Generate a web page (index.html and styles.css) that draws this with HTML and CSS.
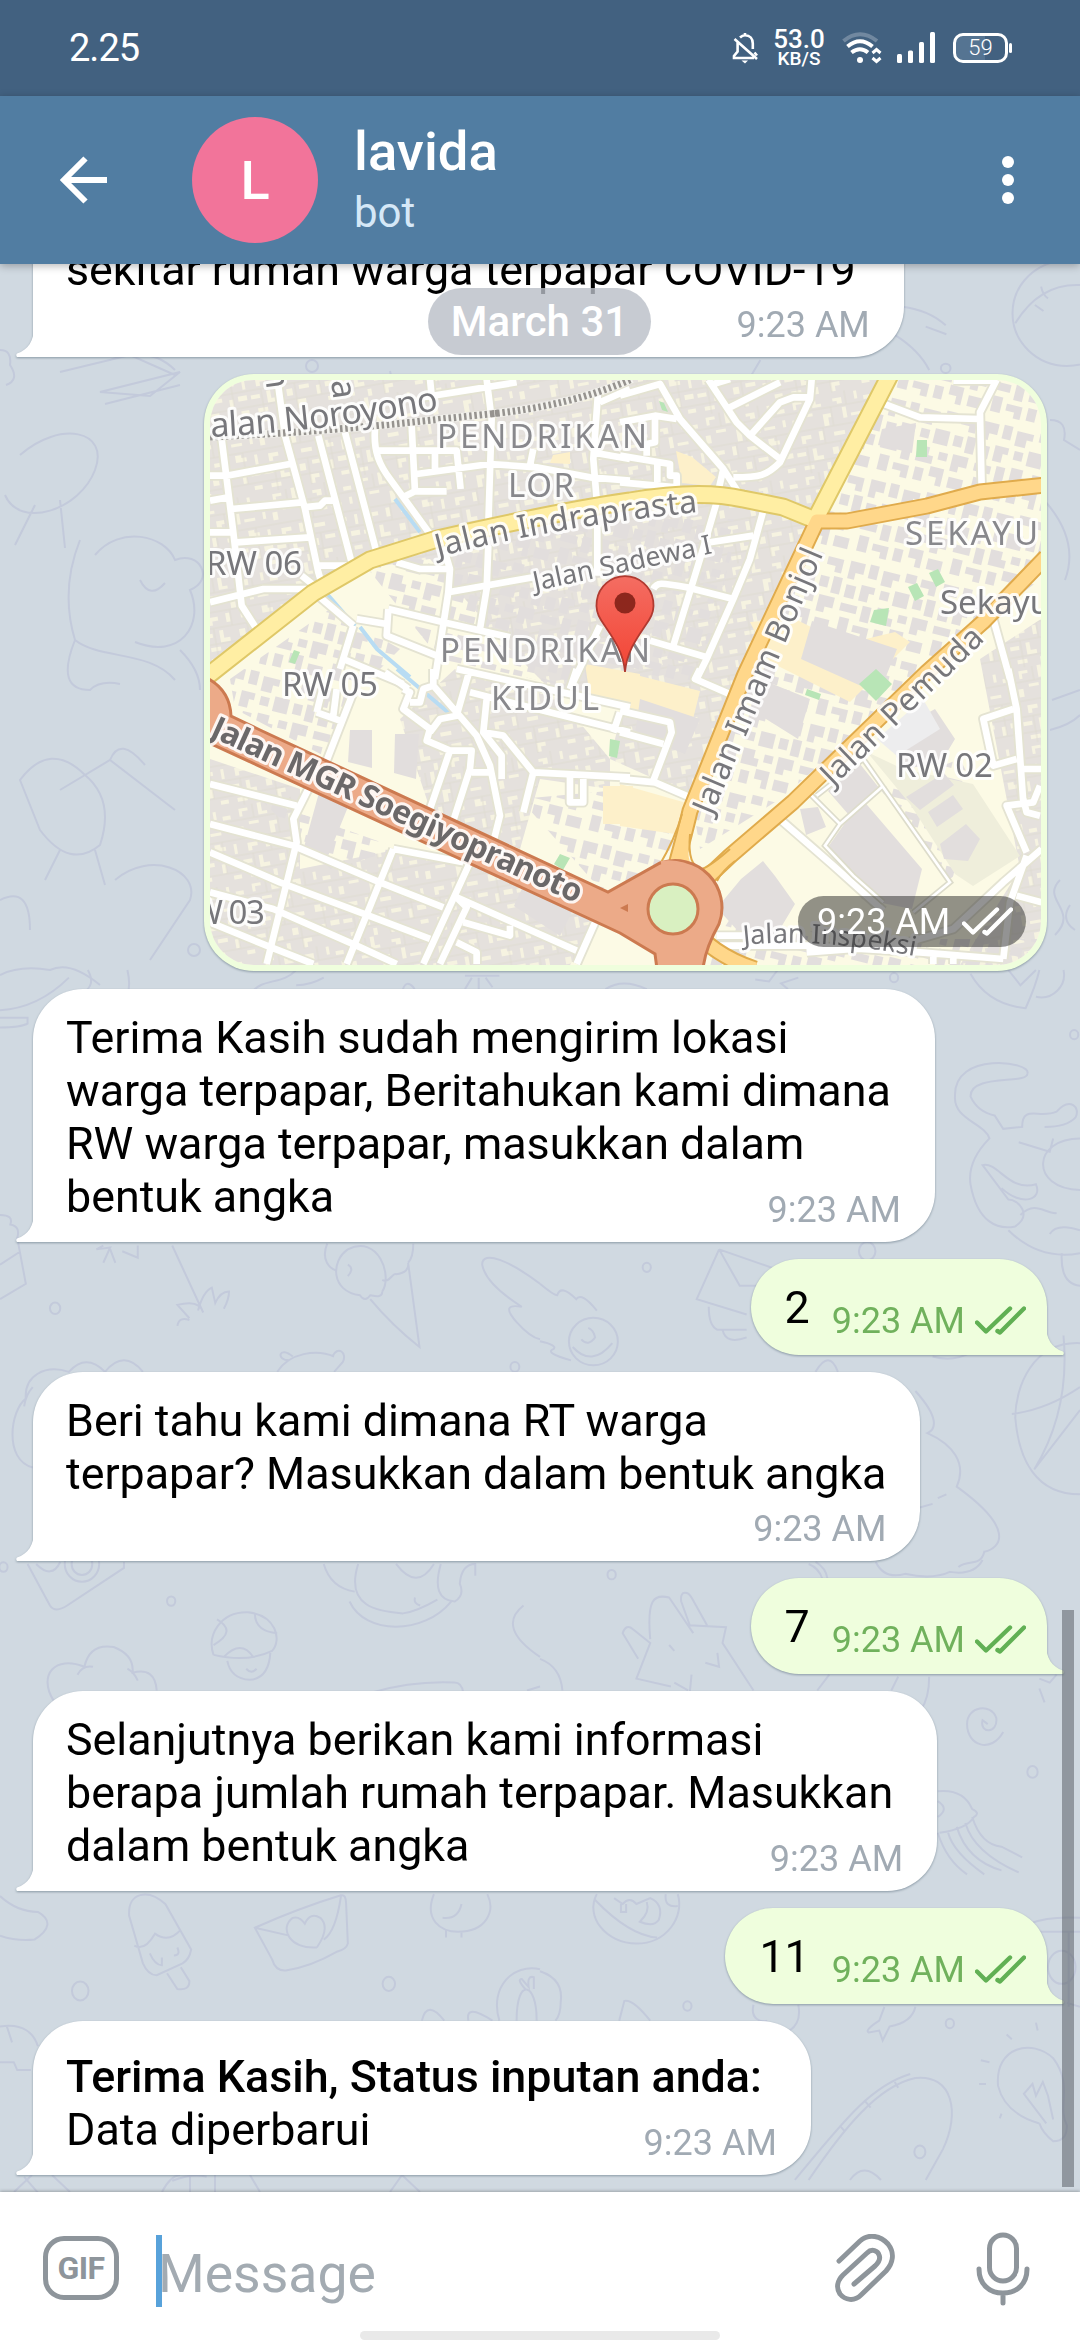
FILE: index.html
```html
<!DOCTYPE html>
<html lang="id">
<head>
<meta charset="utf-8">
<title>lavida</title>
<link rel="stylesheet" href="styles.css">
</head>
<body>
<svg class="defs" width="0" height="0" aria-hidden="true">
  <defs>
    <symbol id="checks" viewBox="0 0 51 29"><path d="M2 16.5L11 25.5L35 2.5M22.5 25L25 26.5L49 2.5" fill="none" stroke="currentColor" stroke-width="4.4" stroke-linecap="round" stroke-linejoin="round"/></symbol>
  </defs>
</svg>
<div class="screen">
  <div class="status">
    <span class="clock">2.25</span>
    <div class="status-icons">
      <svg class="bell" viewBox="0 0 26 32" width="26" height="32" fill="none" stroke="#fff" stroke-width="2.6"><path d="M8 5.5C10 3.5 11.500 3.200 13 3.200C18 3.200 20.800 7 20.800 11.500V17M5.600 10.500V19.500L2 24V26H22M2.500 7L25 27M22.500 20.500L25 23.500M13 1V4"/><path d="M9.500 28.500H16L13 31.500Z" fill="#fff" stroke="none"/></svg>
      <div class="speed"><b>53.0</b><span>KB/S</span></div>
      <svg class="wifi" viewBox="0 0 40 32" width="40" height="32" fill="none" stroke="#fff" stroke-width="4"><path d="M1.500 9Q18 -4.500 35 9" opacity=".25"/><path d="M5.500 14.500Q18 4 30.500 14.500M9.500 20.500Q18 14 26 20.500"/><circle cx="18" cy="28" r="3" fill="#fff" stroke="none"/><path d="M30.500 21L34.500 17.500L38.500 21M30.500 26L34.500 29.500L38.500 26" stroke-width="3"/></svg>
      <svg class="signal" viewBox="0 0 38 32" width="38" height="32" fill="#fff"><rect y="22" width="5" height="9" rx="1.500"/><rect x="11" y="18.500" width="5" height="12.500" rx="1.500"/><rect x="22" y="10" width="5" height="21" rx="1.500"/><rect x="33" y="0" width="5" height="31" rx="1.500"/></svg>
      <div class="battery"><span>59</span></div>
    </div>
  </div>
  <header class="header">
    <svg class="back" viewBox="0 0 48 48" width="48" height="48" fill="none" stroke="#fff" stroke-width="6"><path d="M47 24H5M25.500 2.500L4 24L25.500 45.500"/></svg>
    <div class="avatar">L</div>
    <div class="peer"><div class="name">lavida</div><div class="role">bot</div></div>
    <svg class="menu" viewBox="0 0 12 48" width="12" height="48" fill="#fff"><circle cx="6" cy="6" r="6"/><circle cx="6" cy="24" r="6"/><circle cx="6" cy="42" r="6"/></svg>
  </header>
  <main class="chat">
    <svg class="wallpaper" viewBox="0 264 1080 1928" width="1080" height="1928" aria-hidden="true">
      <g transform="translate(540 0) scale(.3444 .3333)">
        <circle cx="1530" cy="940" r="158"/><path d="M1380 970Q1450 850 1568 855M1455 860Q1460 885 1475 895M1437 915L1462 933M1052 920Q1130 930 1178 976M1120 980L1180 1003M1030 1005Q1100 1050 1130 1110M640 1080L600 1150"/><circle cx="1178" cy="1105" r="14"/>
      </g>
      <path d="M0 350Q12 350 10 365Q20 380 6 385M110 360Q150 345 175 370M390 371Q400 420 415 440M60 372L130 355L175 375M100 392L180 372L150 396ZM105 404L180 385"/><circle cx="312" cy="366" r="6"/>
      <path d="M20 455C60 420 110 430 95 470C80 510 20 530 5 495M35 505L15 545M60 500L65 548M80 540Q60 590 75 640C100 660 150 650 175 680M95 555C120 525 165 535 175 560C200 550 215 580 190 590C205 625 180 660 135 642M140 580Q150 600 165 583M75 640Q55 690 90 690Q100 680 120 684M180 650Q200 670 200 690"/>
      <path d="M20 780Q50 740 85 775Q115 800 100 845Q70 870 40 830ZM60 790L110 760L175 810M110 760Q120 735 145 765M60 850L45 880M95 850L105 885M0 900Q30 885 30 930M115 880C150 850 200 870 190 900L150 960M0 975Q20 965 50 970Q70 960 100 985"/>
      <path d="M1050 420Q1068 420 1064 440L1080 450M1044 500Q1080 540 1065 580M1052 700Q1080 690 1080 690M1050 730Q1070 725 1080 715M1060 880C1040 900 1080 910 1055 935M1070 905Q1060 920 1075 930"/><circle cx="194" cy="950" r="6"/>
      <g transform="translate(0 970) scale(.3444 .3827)">
        <path d="M0 105Q110 100 200 20M0 125H80V140Q60 150 0 150M255 0Q280 40 240 60M370 0Q380 40 370 60M730 60C760 20 820 40 860 0M860 40Q900 40 940 20M1170 50Q1180 25 1200 45L1210 60M1350 15H1450M1370 20L1350 50M1390 20V50M1410 20L1430 45"/>
        <path d="M0 640Q40 640 30 665Q60 670 50 700L75 820L0 860M0 770L60 735M300 720L280 730L320 725L300 765M320 730L335 765M355 735L400 752V720M500 720L590 895M590 895Q580 860 515 875Q540 900 550 910M515 930Q520 905 550 915M575 890Q590 840 615 830L625 870Q640 840 665 840Q665 860 650 885"/><circle cx="160" cy="884" r="15"/>
        <path d="M950 715C930 760 960 780 975 785M1010 730C1100 690 1140 800 1110 840M1110 840C1110 860 1080 850 1075 850Q1060 870 1045 850C960 840 960 760 1010 730M1010 770Q1030 780 1010 800M1110 810C1130 820 1140 790 1150 795Q1190 790 1185 765L1218 985Q1140 930 1075 860M1200 715Q1200 750 1185 765"/>
        <path d="M1568 820C1480 760 1400 730 1400 770Q1410 820 1515 880Q1450 870 1500 920Q1540 960 1568 965"/>
        <path d="M95 1300C10 1280 30 1150 75 1120C70 1060 130 1030 200 1050Q250 1000 305 1050Q360 990 415 1050M70 1140Q75 1110 95 1090M805 1050C840 1000 920 990 970 1010M840 1020C800 1020 810 980 850 1010M965 1010C980 980 1010 1000 995 1025L970 1050"/><circle cx="1495" cy="1037" r="13"/>
      </g>
      <g transform="translate(540 970) scale(.3444 .3827)">
        <path d="M190 50Q240 20 310 50M625 25L665 30L690 0M750 20L700 35L720 50M1250 10Q1300 90 1410 100Q1440 40 1450 0M1360 0L1395 40L1440 0M1440 70C1490 80 1530 40 1520 0"/><circle cx="1028" cy="20" r="12"/><circle cx="1551" cy="169" r="12"/>
        <path d="M1415 270C1430 240 1200 210 1205 330C1200 390 1290 400 1305 440Q1240 500 1250 560C1270 660 1330 680 1380 670C1430 640 1390 600 1360 600L1285 510C1330 500 1360 580 1440 560C1460 600 1400 620 1340 570M1415 270C1420 300 1250 270 1250 330Q1270 370 1320 380L1345 415L1400 410C1400 350 1450 390 1500 370C1540 330 1570 360 1555 385Q1530 410 1465 410M1490 440L1480 475L1390 450M1568 440C1430 440 1420 570 1568 575M1360 680Q1450 760 1568 740M1395 640C1440 600 1470 640 1500 635M1515 740Q1510 820 1568 825M1480 690Q1500 660 1568 680"/>
        <path d="M520 730L455 860L600 900M520 730L680 780M520 730L580 825H640M490 880Q490 930 515 940H600M530 940Q540 980 600 960M0 820Q40 850 50 850Q60 820 105 860Q120 840 165 890M0 970Q50 980 40 990Q10 1000 90 1020"/><ellipse cx="155" cy="971" rx="71" ry="62"/><path d="M95 985Q150 1040 210 975M120 965Q140 985 160 960Q155 940 140 935"/><circle cx="310" cy="777" r="12"/><circle cx="950" cy="735" r="24"/>
        <path d="M800 1050Q840 990 865 1050M1140 1010Q1200 1025 1250 1000M1568 975C1430 970 1380 1090 1380 1170C1390 1280 1440 1370 1568 1370M1370 1160Q1470 1150 1568 1090M1520 955Q1540 1150 1435 1305L1568 1150M1090 1100C1160 1170 1150 1200 1125 1210C1200 1240 1240 1290 1210 1350C1380 1460 1340 1510 1290 1520C1280 1560 1240 1540 1215 1560M1100 1405L1140 1395M1155 1380L1180 1370"/>
      </g>
      <g transform="translate(0 1560) scale(.3444 .3954)">
        <path d="M80 10L145 115Q160 135 195 115L360 20V5M105 10Q150 50 175 5"/><ellipse cx="238" cy="10" rx="50" ry="45"/><ellipse cx="238" cy="10" rx="30" ry="28"/><circle cx="497" cy="104" r="12"/><circle cx="10" cy="18" r="12"/>
        <path d="M940 10Q960 70 1030 80M1040 10C1000 120 1100 130 1170 135Q1210 130 1270 100M1015 105C1060 190 1230 190 1310 105M1280 10Q1250 100 1320 105Q1350 90 1335 60Q1340 10 1380 10V40M1205 95Q1200 110 1220 115M1150 10Q1210 80 1260 10M1520 115Q1440 170 1568 245"/>
        <path d="M620 240C600 190 640 130 720 132C800 140 820 200 790 230Q720 260 620 240M630 150Q690 180 620 215M740 135Q740 180 805 185M650 245Q700 200 735 245M660 255Q670 300 725 303Q780 300 785 235M715 275Q730 290 745 275M155 355C110 290 160 240 245 270Q260 210 330 220Q390 240 385 285Q450 270 455 330M225 290Q240 265 270 270M370 275Q390 285 400 305M1080 335Q1200 305 1320 310Q1340 310 1345 335M1530 330L1568 320"/>
        <path d="M0 850Q50 890 110 890Q170 920 100 960Q50 965 0 950M375 900C370 840 430 830 480 870L555 985Q550 1010 530 1020L455 1050Q430 1050 415 1020ZM390 975Q420 990 450 945Q490 970 525 935M435 995Q450 1025 470 1025V1005M515 980Q525 1000 505 1000M485 1045L515 1085Q550 1090 550 1065L525 1030"/>
        <path d="M740 930Q870 880 990 848Q1005 845 1005 870L1010 970Q1005 985 980 990Q900 1030 830 1038Q800 1040 790 1010ZM740 930L840 950M990 850Q975 940 940 960M920 980C840 985 810 930 850 905Q870 900 885 920Q900 890 930 905Q960 930 920 980M1260 845C1230 910 1280 940 1330 940C1410 940 1440 890 1415 845M1285 905Q1330 910 1340 870M1295 935V955M1340 940V955"/>
        <circle cx="233" cy="1090" r="24"/><circle cx="1129" cy="1072" r="18"/><path d="M0 1180C70 1170 100 1200 110 1230M20 1180L35 1220M0 1270H40L50 1290H90M1450 1165C1420 1080 1490 1020 1568 1035M1500 1165C1500 1050 1560 1070 1558 1165M1525 1085Q1500 1060 1515 1060L1535 1080Q1530 1050 1550 1055V1085M1225 1165Q1240 1110 1290 1165M1360 1165Q1350 1120 1430 1165M70 1560L110 1600M500 1570Q560 1550 600 1560"/>
      </g>
      <g transform="translate(540 1560) scale(.3444 .3954)">
        <circle cx="208" cy="37" r="12"/><path d="M780 10Q810 20 820 48M800 5Q830 20 835 48M975 5Q1000 50 1060 35Q1140 50 1190 30Q1260 40 1285 0M0 250Q60 270 65 330M320 200C310 100 330 85 375 95L445 185M410 105C405 75 430 80 440 95L485 165M410 105L435 165L540 170L530 210L620 330M285 250L240 185Q250 160 270 175L320 210L280 300L380 320M440 290L435 335M390 310L430 330M515 235L520 270L480 260M375 215L390 230"/>
        <path d="M805 330L840 290M1020 330L1040 295M1130 295Q1130 350 1105 380M1450 300L1480 310L1500 290M1465 360L1450 325M1345 435C1310 490 1240 470 1240 415C1240 370 1310 360 1325 400C1330 440 1275 440 1285 405L1300 415"/><circle cx="1430" cy="536" r="15"/>
        <path d="M1155 585C1210 580 1240 600 1255 630Q1280 640 1260 650Q1240 680 1160 690M1255 650Q1280 720 1340 725L1400 752M1235 665Q1260 740 1390 790M1210 675Q1240 760 1340 785M1185 690Q1200 740 1290 795M1155 690Q1180 760 1240 795M1155 610Q1190 630 1155 650"/>
        <path d="M165 845C130 900 190 970 280 970C370 970 420 900 400 845M160 860Q260 950 340 955M215 855L240 870Q260 850 280 870L320 855Q360 870 345 910Q330 930 290 915Q320 890 310 865M235 870V890L250 890V870M365 845Q360 880 400 875M0 1040Q70 1060 60 1120Q60 1150 45 1165M230 1165L245 1115Q270 1110 320 1165"/><ellipse cx="1515" cy="1030" rx="40" ry="42"/><path d="M1420 920Q1480 900 1568 905M1450 940H1568M1535 940V1130M1568 1130L1530 1120"/>
        <path d="M620 1125C610 1160 640 1170 660 1165M750 1125Q760 1170 725 1190M1000 1130L985 1165Q940 1190 955 1195L985 1190L995 1215L1015 1180Q1080 1170 1090 1130"/><circle cx="428" cy="1128" r="12"/><circle cx="1190" cy="1172" r="12"/>
        <path d="M740 1568C880 1420 960 1330 1075 1300M1090 1310C980 1330 880 1440 780 1568M1090 1310C1200 1300 1220 1400 1170 1490L1120 1568M870 1430L885 1445M945 1370L960 1385M1030 1320L1040 1335M900 1568Q940 1520 990 1568"/><ellipse cx="1103" cy="1497" rx="16" ry="16"/>
        <path d="M1450 1425Q1350 1400 1330 1330C1320 1230 1430 1210 1490 1260C1550 1330 1500 1380 1530 1430Q1530 1470 1490 1470Q1460 1450 1450 1425M1470 1425L1405 1350L1430 1325L1440 1355L1460 1320L1475 1355L1490 1415M1280 1265L1305 1270M1355 1200L1370 1212M1440 1170L1445 1190M1275 1325H1295M1340 1400L1335 1412"/>
      </g>
      <path d="M14 2192L32 2175M52 2175L70 2192M162 2192Q170 2176 180 2175M190 2175V2192M215 2175V2192M250 2175L260 2192M390 2192L402 2175L420 2192"/>
    </svg>

    <div class="bubble in first stacked"><p>sekitar rumah warga terpapar COVID-19</p><time>9:23 AM</time></div>

    <div class="map-bubble">
      <svg class="map" viewBox="210 381 831 585" width="831" height="585">
        <defs>
          <pattern id="dense" width="88" height="76" patternUnits="userSpaceOnUse" patternTransform="rotate(-10)">
            <rect width="88" height="76" fill="#e5e1dd"/>
            <path fill="#f6f3e1" d="M6 3h9v3h-6v5h-3zM25 0h4v9h5v3h-9zM46 6h9v6h-5v-3h-4zM68 2h3v8h-3zM77 8h8v4h-8zM3 21h5v8h-5zM14 17h10v3h-10zM34 20h8v4h-3v8h-5zM54 16h4v11h-4zM62 23h11v3h-11zM81 19h3v7h-3zM9 38h10v4h-6v4h-4zM27 36h4v9h-4zM42 39h11v4h-11zM64 35h6v3h5v4h-11zM83 37h3v10h-3zM2 54h9v4h-9zM18 52h4v8h6v4h-10zM38 54h6v7h-6zM51 52h10v4h-10zM68 55h4v9h-4zM77 53h9v5h-9zM7 68h10v4h-10zM30 68h4v7h-4zM47 66h9v4h-5v5h-4zM78 68h8v4h-8z"/>
            <path stroke="#dedbcf" stroke-width=".8" fill="none" d="M0 14H88M0 33H88M0 49H88M0 65H88M20 0V14M43 14V33M59 0V14M32 33V49M72 33V65M47 49V76M13 49V76"/>
          </pattern>
          <pattern id="loose" width="96" height="84" patternUnits="userSpaceOnUse" patternTransform="rotate(14)">
            <path fill="#e2dedd" d="M2 3h15v11h-8v7h-7zM22 2h9v14h-9zM36 5h17v7h-6v8h-11zM59 2h11v9h-11zM75 4h16v14h-7v-6h-9zM3 27h10v13h-10zM18 24h14v7h-5v9h-9zM38 25h9v9h-9zM52 22h15v15h-15zM72 24h9v11h-9zM85 22h9v17h-9zM2 46h17v8h-17zM24 44h9v16h-9zM39 42h12v8h5v8h-17zM61 44h9v8h-9zM75 43h16v11h-8v6h-8zM4 60h10v16h-10zM19 65h16v13h-7v-6h-9zM41 64h9v13h-9zM56 60h14v18h-6v-8h-8zM76 66h15v11h-15z"/>
          </pattern>
          <linearGradient id="pin" x1="0" y1="0" x2="0" y2="1"><stop offset="0" stop-color="#f46d62"/><stop offset="1" stop-color="#f34434"/></linearGradient>
          <g id="lanes">
            <path transform="translate(190 360) scale(.3333)" d="M262 60L285 230L345 450L385 640L400 690M60 350H110L300 315M60 425L115 415M60 520H130M95 240L130 520L155 740L200 810M125 450L335 430M340 445L390 440L405 425H430M140 550L360 535M385 230L490 630M465 220L565 600M380 620H490M555 210C550 280 570 320 600 360L720 525M560 275H800L812 390M665 200L675 397H770M645 412L675 397M735 275V340M680 345L900 315L1040 325L1200 355L1320 365M890 62L905 180L895 500M895 560L890 690L870 810M700 115L980 70M1225 90L1210 300L1220 420M1222 500V650M1020 320L1030 270M1320 90L1230 130M1205 280L1320 300M60 730L220 690H350M335 650L385 690M390 715L490 800M500 780L590 795M490 800L450 930M460 900L640 975M620 610L690 630H780L775 700L735 960M780 630L765 580M775 700L1030 655M595 750L760 790L960 835M595 750L590 830L740 890M1140 990L1230 800M720 60L725 110"/>
            <path transform="translate(620 360) scale(.3333)" d="M0 110L120 75L180 180L310 330L355 400M0 190L105 170L170 180M105 170V250L80 255V290M0 290L150 315V350H170V385M112 310V370M0 370L170 385M265 62L350 190L390 230L480 300M320 150L480 70M280 75L330 60M390 230L480 130L520 115H570M575 62L570 120L480 310C440 350 420 355 340 355M310 330L295 395M290 430L240 600L160 860M270 550L400 530M430 455L390 600L340 720L260 900L230 960M100 690C110 670 120 670 200 685L340 720M90 845L260 895M780 130L900 175L1080 180M1130 62L1080 160L1085 380M1000 65H1130M1120 780L1170 960"/>
            <path transform="translate(190 670) scale(.3333)" d="M490 70L410 275M380 130L450 155M400 50L380 130M440 60L430 140M640 60L660 70L640 120L720 180L710 215L780 245H845L840 300L790 455M780 245L720 420M585 10L655 60M660 100H690L700 60L730 50L800 130L860 200L900 290L930 440L910 520M730 0V50M840 0L800 140L750 150L720 190M800 0L1320 115M840 70L1320 190M890 90L880 190L940 200L1030 310L1000 430M1030 310L1320 325M880 190L935 260V330M900 310H845M1290 130L1270 190M1140 320V400H1180V330M1160 0L1140 60M360 350L310 450L320 520L230 885M60 345L320 410M60 465L310 530L570 640L760 715M60 550L270 640L550 745L720 810M60 670L250 720L500 830L620 885M60 760L230 830L370 885M610 540L470 885M610 540L820 580M840 580L700 885M800 685L1160 845M800 685L830 715L750 885M820 760L960 800V770M1220 750L1160 885M800 820L860 850V885"/>
            <path transform="translate(620 670) scale(.3333)" d="M240 0L225 30L340 80M0 125L150 160L155 190L100 335M0 190L130 225M0 330L105 340L210 385M485 455L640 590L790 725M1165 0L1190 120L1210 400M1180 120L1090 150L1120 290L1190 270M1265 300H1200M1260 350L1240 400L1160 410L1220 550M1210 390L1220 430L1260 440M1265 540L1150 640L1000 780L830 830L560 850M290 800H400M300 830H560L900 850L1150 870M1220 560L1170 700L1150 870M1190 680L1265 700M940 850V885M1000 850V885"/>
          </g>
          <path id="indra" d="M438 558Q560 526 720 511"/>
          <path id="noro" d="M211 438Q330 432 460 407"/>
          <path id="insp" d="M744 946Q820 938 925 959"/>
        </defs>
        <rect x="210" y="381" width="831" height="585" fill="#fcfae5"/>
        <path fill="url(#dense)" d="M210 381H880L815 520L748 680L700 800L610 760L630 680L560 700L500 640L430 560L360 570L210 670ZM210 760L300 790V870L400 850L460 860L600 920L570 966H210ZM455 670L560 700L610 760V790L540 780L520 850L430 810L400 720ZM980 660L1041 620V966H960L1020 870Z"/>
        <path fill="url(#loose)" d="M880 381H1041V580L960 640L850 740L780 800L700 850L690 790L748 680L820 520ZM360 560L460 550L610 520L740 520L700 680L580 690L440 660ZM230 680L330 610L400 650L350 700L330 760L235 710ZM520 800L630 790L690 810L660 870L600 890ZM800 966H700L730 920L860 940H1041V966ZM880 790L960 760L1000 840L950 880ZM260 800L400 850L330 870Z"/>
        <g fill="#fdf0ca"><path d="M676 452l16 6 24 20-6 9-28-3zM553 456l17-3v12l-20-1zM585 665l55 10v35l-50-12zM795 620l50 25 50-12 15 10-60 60-80-40-20-40z"/><path d="M620 672l80 20-15 60-60-45zM620 785l70 20-15 30-55-8zM603 787h30v38h-30z"/></g>
        <g fill="#e2dedd"><path d="M350 731h22v38l-24-6zM395 735h24l-3 45-22-6zM320 790l30 13-22 54-24-9zM530 872l50 25-20 40-46-30zM812 622l85 28-18 45-78-35zM760 680l50 20-12 40-48-30zM862 800l60 70-10 40-50-10-34-52zM828 792l32-27 20 25-32 25zM800 810l18-2 8 20-20 8zM741 880l22-18 12 15 20 28-18 30-40-4-20-22zM882 430l34-6-4 30-34-8zM640 700l60 20-15 35-50-20z"/></g>
        <path fill="#efeedb" d="M867 753L910 805L955 875L973 887L1020 857L973 785L903 770Z"/>
        <path fill="#e2dedd" d="M906 798l38-24 10 12-34 25zM928 813l25-17 10 14-26 18zM940 845l26-20 14 15-12 22-24-2zM890 735l45-25 20 30-15 25-40 5z"/>
        <path fill="#ededee" d="M877 740L923 700L940 730L897 757Z"/>
        <g fill="#b8e5b6"><path d="M917 441h10v17h-11zM929 574l9-4 7 13-9 5zM908 588l9-4 7 13-9 5zM874 611l15-2-3 18-16-4zM659 402l5 2 4 9-6-2zM610 740l10 2-3 17-8-2zM560 855l10 4-7 12-9-6zM876 670L892 685L876 702L859 685ZM807 690l14 5-2 6-14-5zM294 651l6 2-5 12-6-2z"/></g>
        <path d="M328 596L355 627M360 628L377 650L410 678M397 670L450 715M395 500L420 533" fill="none" stroke="#b8dcf3" stroke-width="4"/>
        <use href="#lanes" class="lane-edge"/>
        <use href="#lanes" class="lane"/>
        <g transform="translate(620 670) scale(.3333)" fill="none"><path d="M570 375L660 465L615 530L700 620L790 700M590 380L730 270L990 640L880 730M660 465L790 350" stroke="#dddccb" stroke-width="18"/><path d="M570 375L660 465L615 530L700 620L790 700M590 380L730 270L990 640L880 730M660 465L790 350" stroke="#fff" stroke-width="8"/></g>
        <path class="rail-base" d="M210 438Q320 433 423 422T490 415Q570 407 632 380"/>
        <path class="rail" d="M210 438Q320 433 423 422T490 415Q570 407 632 380"/>

        <path class="yellow-edge" d="M205 679L313 594L370 561L437 540Q560 512 630 502Q700 490 743 500L783 508L815 521L890 376"/>
        <path class="orange-edge" d="M1046 486L980 493L927 507L847 522H817L745 675L690 812Q684 838 672 880M1046 558L983 623L927 673L793 803L730 857L695 890M690 925Q710 955 755 970"/>
        <path class="yellow-road" d="M205 679L313 594L370 561L437 540Q560 512 630 502Q700 490 743 500L783 508L815 521L890 376"/>
        <path class="orange-road" d="M1046 486L980 493L927 507L847 522H817L745 675L690 812Q684 838 672 880M1046 558L983 623L927 673L793 803L730 857L695 890M690 925Q710 955 755 970"/>
        <path d="M690 840Q684 870 701 869Q711 868 730 852L712 885H664Q674 866 680 835Z" fill="#ffd78a"/>
        <path d="M659 867Q675 840 682 815M690 835Q687 868 702 870Q712 866 730 850M717 882Q722 872 735 862" fill="none" stroke="#e0ab4c" stroke-width="2"/>
        <path d="M205 678Q230 690 231 717L260 731L608 893L660 864A47 47 0 0 1 719 925Q705 950 703 970H657L655 955L620 934L205 742Z" fill="#ecaa88" stroke="#cc7a50" stroke-width="3"/>
        <path d="M661 864Q672 862 685 866" stroke="#ecaa88" stroke-width="4" fill="none"/>
        <circle cx="673" cy="910" r="25" fill="#d9f0c1" stroke="#cc7a50" stroke-width="3"/>
        <path d="M620 909l8-4v8z" fill="#cc7a50"/>

        <g class="label">
          <text class="street noro"><textPath href="#noro" textLength="230">alan Noroyono</textPath></text>
          <text transform="translate(331 382) rotate(82)" font-size="34">a</text>
          <text transform="translate(264 370) rotate(82)" font-size="34">n</text>
          <text class="area" x="437" y="449" textLength="212">PENDRIKAN</text>
          <text class="area" x="508" y="498" textLength="68">LOR</text>
          <text class="street"><textPath href="#indra" textLength="264">Jalan Indraprasta</textPath></text>
          <text class="small" transform="translate(535 592) rotate(-12)" textLength="182">Jalan Sadewa I</text>
          <text x="206" y="576" font-size="33" textLength="96">RW 06</text>
          <text x="282" y="697" font-size="33" textLength="96">RW 05</text>
          <text x="896" y="778" font-size="33" textLength="97">RW 02</text>
          <text x="173" y="925" font-size="33" textLength="92">RW 03</text>
          <text class="area" x="440" y="663" textLength="212">PENDRIKAN</text>
          <text class="area" x="491" y="711" textLength="110">KIDUL</text>
          <text class="area" x="905" y="546" textLength="135">SEKAYU</text>
          <text x="940" y="615" font-size="33">Sekayu</text>
          <text class="street" transform="translate(712 817) rotate(-67)" textLength="285">Jalan Imam Bonjol</text>
          <text class="street" transform="translate(833 788) rotate(-44)" textLength="212">Jalan Pemuda</text>
          <text class="main" transform="translate(209 737) rotate(24.500)" textLength="404">Jalan MGR Soegiyopranoto</text>
          <text class="small"><textPath href="#insp" textLength="172">Jalan Inspeksi</textPath></text>
        </g>
        <path d="M625 673C623 650 610 635 601 621A28.500 28.500 0 1 1 649 621C640 635 627 650 625 673Z" fill="url(#pin)" stroke="#b03a30" stroke-width="1.800"/>
        <circle cx="625" cy="604" r="10.500" fill="#8d271d"/>
      </svg>
      <div class="map-time"><span>9:23 AM</span><svg class="ticks"><use href="#checks"/></svg></div>
    </div>

    <div class="bubble in"><p>Terima Kasih sudah mengirim lokasi<br>warga terpapar, Beritahukan kami dimana<br>RW warga terpapar, masukkan dalam<br>bentuk angka</p><time>9:23 AM</time></div>
    <div class="bubble out"><p>2</p><time>9:23 AM</time><svg class="ticks"><use href="#checks"/></svg></div>
    <div class="bubble in stacked"><p>Beri tahu kami dimana RT warga<br>terpapar? Masukkan dalam bentuk angka</p><time>9:23 AM</time></div>
    <div class="bubble out"><p>7</p><time>9:23 AM</time><svg class="ticks"><use href="#checks"/></svg></div>
    <div class="bubble in"><p>Selanjutnya berikan kami informasi<br>berapa jumlah rumah terpapar. Masukkan<br>dalam bentuk angka</p><time>9:23 AM</time></div>
    <div class="bubble out"><p>11</p><time>9:23 AM</time><svg class="ticks"><use href="#checks"/></svg></div>
    <div class="bubble in last"><p><strong>Terima Kasih, Status inputan anda:</strong><br>Data diperbarui</p><time>9:23 AM</time></div>

    <div class="date">March 31</div>
    <div class="scrollbar"></div>
  </main>
  <footer class="composer">
    <div class="gif">GIF</div>
    <div class="field">Message</div>
    <svg class="clip" viewBox="0 0 60 68" width="60" height="68" fill="none" stroke="#8e959b" stroke-width="5" stroke-linecap="round" stroke-linejoin="round"><path d="M4 27L25 7C34 -1 46 2 53 10C60 19 58 29 51 37L26 61C19 68 10 66 5 60C1 54 2 47 8 41L32 19C37 14 43 17 44 21C46 25 43 29 40 32L19 50"/></svg>
    <svg class="mic" viewBox="0 0 54 74" width="54" height="74" fill="none" stroke="#8e959b" stroke-width="5" stroke-linecap="round"><rect x="13.500" y="3" width="27" height="46" rx="13.500"/><path d="M3 37C3 52 13 61 27 61S51 52 51 37M27 61V71"/></svg>
    <div class="home"></div>
  </footer>
</div>
</body>
</html>
```
FILE: styles.css
```css
* { box-sizing: border-box; }
body { margin: 0; font-family: Roboto, "Liberation Sans", sans-serif; }
p { margin: 0; }
.defs { position: absolute; }
.screen { width: 1080px; height: 2340px; display: flex; flex-direction: column; overflow: hidden; background: #fff; }

.status { height: 96px; flex: none; background: #426180; color: #fff; display: flex; align-items: center; justify-content: space-between; padding: 0 68px 0 69px; }
.clock { font-size: 38px; letter-spacing: -1px; }
.status-icons { display: flex; align-items: center; }
.bell { margin-right: 16px; }
.speed { width: 50px; display: flex; flex-direction: column; align-items: center; margin-right: 18px; }
.speed b { font-size: 26px; line-height: 21px; font-weight: 500; }
.speed span { font-size: 19px; line-height: 17px; font-weight: 500; }
.wifi { margin-right: 15px; }
.signal { margin-right: 18px; }
.battery { width: 55px; height: 30px; border: 3px solid #fff; border-radius: 10px; display: grid; place-items: center; font-size: 22px; font-weight: 300; line-height: 24px; position: relative; margin-right: 4px; background: linear-gradient(90deg, #557492 59%, transparent 59%); }
.battery::after { content: ""; position: absolute; right: -7px; top: 7px; width: 3px; height: 10px; border-radius: 2px; background: #fff; }

.header { height: 168px; flex: none; background: #517da2; color: #fff; display: flex; align-items: center; padding: 0 66px 0 60px; position: relative; z-index: 2; box-shadow: 0 2px 8px rgba(0,0,0,.28); }
.avatar { width: 126px; height: 126px; margin-left: 84px; border-radius: 50%; background: #f2749a; display: grid; place-items: center; font-size: 54px; font-weight: 500; }
.peer { margin-left: 36px; flex: 1; }
.name { font-size: 54.500px; font-weight: 500; line-height: 62px; margin-top: -2px; }
.role { font-size: 42px; line-height: 50px; color: #d5e8f7; margin-top: 6px; }

.chat { height: 1928px; flex: none; position: relative; overflow: hidden; display: flex; flex-direction: column; justify-content: flex-end; gap: 17px; padding: 0 33px 17px; background: #d0d9e1; }
.wallpaper { position: absolute; left: 0; top: 0; fill: none; stroke: #c3cadb; stroke-width: 2; }
.wallpaper * { vector-effect: non-scaling-stroke; }

.bubble { position: relative; flex: none; display: grid; filter: drop-shadow(0 1.5px 1px rgba(80,100,115,.55)); font-size: 44.800px; line-height: 53px; color: #000; }
.bubble p { grid-area: 1 / 1; white-space: nowrap; }
.bubble time { grid-area: 1 / 1; justify-self: end; align-self: end; font-size: 36px; line-height: 42px; color: #a1aab3; }
.bubble strong { font-weight: 500; }
.in { align-self: flex-start; padding: 22px 34px 19px 33px; border-radius: 50px 50px 50px 0; background: #fff; }
.in p { padding-right: 10px; }
.in time { margin-bottom: -8px; }
.stacked p { padding-right: 0; }
.stacked time { grid-area: 2 / 1; margin: 8px 0 -8px; }
.first { padding-top: 80px; }
.first p { padding-right: 14px; }
.last { padding-top: 29px; }
.last p { padding-right: 15px; }
.in::before, .out::after { content: ""; position: absolute; bottom: 0; width: 18px; height: 30px; background: inherit; }
.in::before { left: -17px; clip-path: path("M18 0C18 14 12 23 1 26.500Q-.5 28 1 30H18Z"); }
.out { align-self: flex-end; height: 96px; display: flex; align-items: flex-start; padding: 22px 21px 0 34px; border-radius: 48px 48px 0 48px; background: #effedd; }
.out time { color: #70b15c; margin: 19px 0 0 22px; align-self: flex-start; }
.out::after { right: -17px; clip-path: path("M0 0C0 14 6 23 17 26.500Q18.500 28 17 30H0Z"); }
.ticks { width: 51px; height: 29px; color: #61b054; flex: none; }
.out .ticks { margin: 25px 0 0 10px; }

.map-bubble { position: relative; flex: none; align-self: flex-end; width: 843px; height: 597px; padding: 6px; margin-bottom: 1px; border-radius: 50px; background: #effedd; filter: drop-shadow(0 1.5px 1px rgba(80,100,115,.55)); }
.map { display: block; border-radius: 44px; }
.map-time { position: absolute; right: 21px; bottom: 24px; width: 228px; height: 51px; border-radius: 26px; padding-left: 19px; display: flex; align-items: center; background: rgba(40,40,40,.5); color: #fff; font-size: 36px; line-height: 42px; }
.map-time .ticks { color: #fff; margin-left: 12px; }
.lane, .lane-edge, .rail, .rail-base, .yellow-edge, .yellow-road, .orange-edge, .orange-road { fill: none; stroke-linejoin: round; }
.lane-edge { stroke: #e4e3d2; stroke-width: 31px; }
.lane { stroke: #fff; stroke-width: 20px; }
.rail-base { stroke: #f4f3ee; stroke-width: 8px; }
.rail { stroke: #96938f; stroke-width: 7px; stroke-dasharray: 2.500 2.700; }
.yellow-edge { stroke: #dfc868; stroke-width: 19px; }
.yellow-road { stroke: #ffeea3; stroke-width: 15px; }
.orange-edge { stroke: #e0ab4c; stroke-width: 17px; }
.orange-road { stroke: #ffd78a; stroke-width: 13px; }
.label { font-family: "Noto Sans", "Open Sans", sans-serif; fill: #77777b; stroke: rgba(255,255,255,.88); stroke-width: 6px; stroke-linejoin: round; paint-order: stroke; }
.label .area { font-size: 33px; letter-spacing: 2px; fill: #88888c; }
.label .street { font-size: 32px; }
.label .noro { font-size: 34px; }
.label .small { font-size: 27px; }
.label .main { font-size: 32px; font-weight: 700; fill: #6b6869; }

.date { position: absolute; left: 428px; top: 24px; width: 223px; height: 67px; border-radius: 34px; background: rgba(185,190,199,.8); color: #fff; display: grid; place-items: center; font-size: 42px; font-weight: 500; }
.scrollbar { position: absolute; left: 1062px; top: 1346px; width: 12px; height: 577px; background: rgba(80,86,93,.5); }

.composer { height: 148px; flex: none; position: relative; display: flex; align-items: flex-start; padding: 40px 50px 0 43px; background: #fff; box-shadow: 0 -1px 3px rgba(0,0,0,.25); }
.gif { width: 76px; height: 64px; margin-top: 4px; border: 5px solid #8e959b; border-radius: 21px; display: grid; place-items: center; color: #8e959b; font-size: 32px; font-weight: 700; line-height: 1; letter-spacing: -.5px; }
.field { flex: 1; margin: 3px 0 0 37px; border-left: 6px solid #58a2da; height: 72px; padding-top: 9px; font-size: 53.500px; line-height: 60px; color: #a3abb2; text-indent: -4px; }
.clip { margin: 2px 81px 0 0; }
.home { position: absolute; left: 360px; bottom: 0; width: 360px; height: 9px; border-radius: 5px; background: #e9e9e9; }
```
